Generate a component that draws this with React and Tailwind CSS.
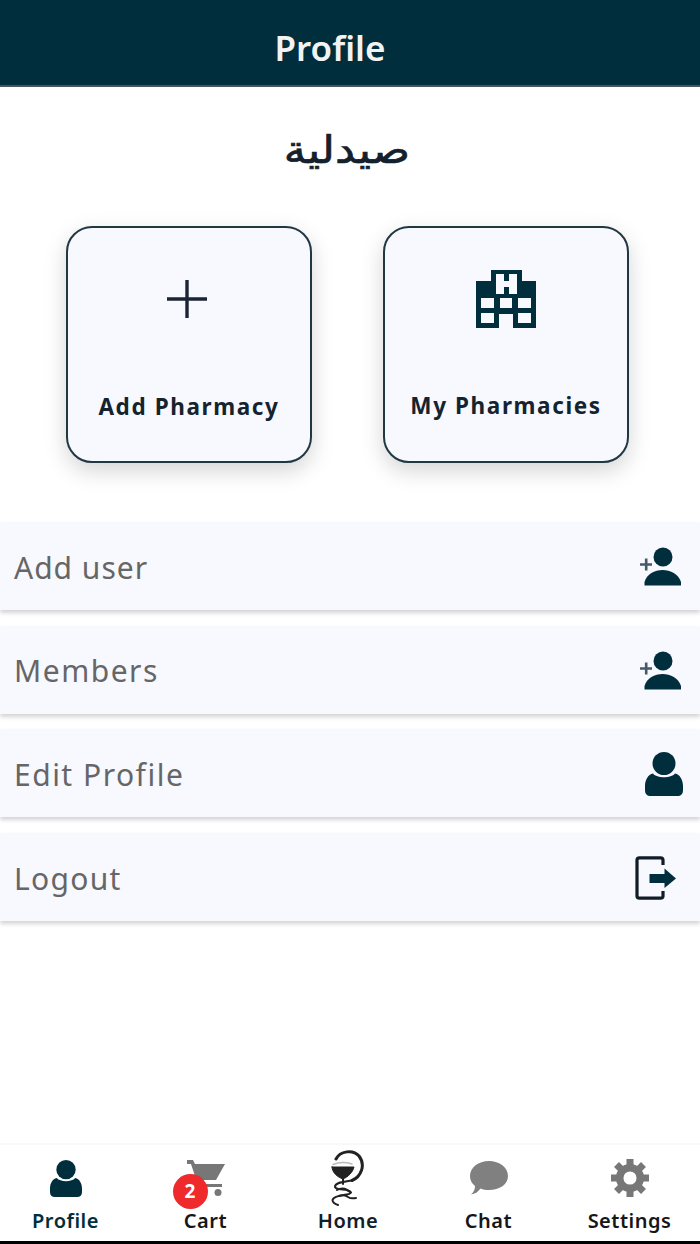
const Person = ({ className }) => (
  <svg viewBox="0 0 38 44" className={className} fill="#002e3d" preserveAspectRatio="none">
    <circle cx="19" cy="11.5" r="11.5" />
    <path d="M8 21.5C12 26.5 26 26.500 30 21.500C35 22.500 38 28 38 34V38C38 42 36 44 32 44H6C2 44 0 42 0 38V34C0 28 3 22.500 8 21.500Z" />
  </svg>
);

const PersonAdd = () => (
  <svg viewBox="0 0 42 39" className="h-[39px] w-[42px]">
    <circle cx="23" cy="10" r="9.500" fill="#002e3d" />
    <path d="M4.500 38.500V35C9 19 36 19 41 35V38.500Z" fill="#002e3d" />
    <path d="M0 17.500H12M6.200 11.500V23.500" stroke="#455a66" strokeWidth="2.600" />
  </svg>
);

const Exit = () => (
  <svg viewBox="0 0 42 44" className="h-[44px] w-[42px]">
    <path d="M28 9V4Q28 1.800 25.500 1.800H4.500Q2 1.800 2 4V40Q2 42.200 4.500 42.200H25.500Q28 42.200 28 40V35" fill="none" stroke="#101c26" strokeWidth="3.200" />
    <path d="M14.500 18H29.500V12.500L41 22.500L29.500 32V27H14.500Z" fill="#002e3d" />
  </svg>
);

const Hospital = () => (
  <svg viewBox="0 0 60 58" className="h-[58px] w-[60px]">
    <path fill="#002e3d" fillRule="evenodd" d="M15 0H46V11H60V58H37V44H23V58H0V11H15ZM20 4V24H41V4ZM5 28V38H18V28ZM24 28V38H36V28ZM42 28V38H55V28ZM5 43V53H18V43ZM42 43V53H55V43Z" />
    <path d="M28 4V11H33V4H36V0H24V4ZM28 24V17H33V24Z" fill="#002e3d" />
  </svg>
);

const Cart = () => (
  <svg viewBox="0 0 38 37" className="h-[37px] w-[38px]" fill="#777">
    <path d="M0 0H6L8 4H38L29 20H12L10 24H35V27H6L9 19L4 4H0Z" />
    <circle cx="11" cy="32.500" r="3.500" />
    <circle cx="31" cy="32.500" r="3.500" />
  </svg>
);

const Bowl = () => (
  <svg viewBox="0 0 36 56" className="h-[56px] w-[36px]" fill="none" stroke="#222" strokeLinecap="round">
    <path d="M6 9C10 1 23-1 29 6C36 15 31 27 22 30.500" strokeWidth="3" />
    <path d="M22 30.500C14 32 5 32 5 37C6 41 19 38 21 42.500C20 46 4 44 2.500 50C2.500 53 5 54 8 55" strokeWidth="2" />
    <path d="M2 17H24C23 22 18 27 13 29C7 27 2 22 2 17Z" fill="#222" strokeWidth="1" />
    <path d="M3 14.500Q12 11 22 14" stroke="#bbb" strokeWidth="1.500" />
    <path d="M13 28V34M7 40Q14 36 20 42M9 46Q15 44 18 47Q21 49 26 48" strokeWidth="2" />
  </svg>
);

const Chat = () => (
  <svg viewBox="0 0 38 34" className="h-[34px] w-[38px]" fill="#808080">
    <path d="M19 0C29.500 0 38 6.500 38 15C38 23.500 29.500 29 19 29C16 29 13 28.600 10.500 27.500C8 31 5 33 1 33.500C4 31 5 28 5 25C1.500 22 0 19 0 15C0 6.500 8.500 0 19 0Z" />
  </svg>
);

const Gear = () => (
  <svg viewBox="-19 -19 38 38" className="h-[38px] w-[38px]" fill="none" stroke="#777">
    <circle r="10.300" strokeWidth="7.500" />
    <path d="M0-19V-13M0 13V19M-19 0H-13M13 0H19M-13.500-13.500L-9-9M13.500-13.500L9-9M-13.500 13.500L-9 9M13.500 13.500L9 9" strokeWidth="7" />
  </svg>
);

const rows = [
  { label: 'Add user', icon: <PersonAdd />, pad: 'pr-[18px]', track: 'tracking-[1px]' },
  { label: 'Members', icon: <PersonAdd />, pad: 'pr-[18px]', track: 'tracking-[1.5px]' },
  { label: 'Edit Profile', icon: <Person className="h-[44px] w-[38px]" />, pad: 'pr-[17px]', track: 'tracking-[1.5px]' },
  { label: 'Logout', icon: <Exit />, pad: 'pr-[23px]', track: 'tracking-[1.3px]' },
];

const tabs = [
  { label: 'Profile', icon: <Person className="h-[37px] w-[32px]" />, color: 'text-[#002e3d]' },
  { label: 'Cart', icon: <Cart />, badge: '2', color: 'text-[#161616]' },
  { label: 'Home', icon: <Bowl />, color: 'text-[#10202b]' },
  { label: 'Chat', icon: <Chat />, color: 'text-[#161616]' },
  { label: 'Settings', icon: <Gear />, color: 'text-[#161616]' },
];

function ActionCard({ icon, label, labelClass }) {
  return (
    <button className="flex h-[237px] w-[246px] flex-col items-center rounded-[26px] border-2 border-[#213843] bg-[#f8f8ff] shadow-[0_8px_22px_rgba(0,0,0,0.17)]">
      <span className="flex h-[142px] items-center justify-center">{icon}</span>
      <span className={`whitespace-nowrap text-[22.500px] leading-8 font-bold text-[#14242e] ${labelClass}`}>{label}</span>
    </button>
  );
}

export default function App() {
  return (
    <div className="flex h-[1244px] w-[700px] flex-col overflow-hidden bg-white font-['Noto_Sans',sans-serif]">
      <header className="flex h-[87px] shrink-0 justify-center border-b-2 border-[#4c5265] bg-[#002e3d] pt-[24px] pr-[40px]">
        <h1 className="text-[35px] leading-[48px] font-semibold text-[#f3f3f3]">Profile</h1>
      </header>
      <main className="flex flex-1 flex-col">
        <h2 dir="rtl" className="mt-[38px] mr-[6px] h-[50px] scale-x-[1.18] text-center font-['DejaVu_Sans',sans-serif] text-[38px] leading-[50px] font-normal text-[#14202b] [-webkit-text-stroke:0.7px_#14202b]">صيدلية</h2>
        <section className="mt-[51px] flex justify-between pr-[71px] pl-[66px]">
          <ActionCard
            label="Add Pharmacy"
            labelClass="mt-[21px] tracking-[1.6px]"
            icon={<svg viewBox="0 0 40 40" className="mr-[5px] h-[40px] w-[40px]"><path d="M0 20H40M20 1V39" stroke="#1b2433" strokeWidth="3.400" /></svg>}
          />
          <ActionCard label="My Pharmacies" labelClass="mt-[20px] tracking-[1.6px]" icon={<Hospital />} />
        </section>
        <ul className="mt-[59px] flex flex-col gap-[15.700px]">
          {rows.map((r) => (
            <li key={r.label} className={`flex h-[88px] items-center justify-between bg-[#f8f8ff] pt-px pl-[14px] shadow-[0_3px_4px_rgba(0,0,0,0.17)] ${r.pad}`}>
              <span className={`pt-[2px] text-[30px] leading-10 text-[#666] ${r.track}`}>{r.label}</span>
              {r.icon}
            </li>
          ))}
        </ul>
      </main>
      <nav className="grid h-[101px] shrink-0 grid-cols-[131px_149px_136px_145px_137px] border-t-2 border-b-3 border-t-[#f8f8f8] border-b-black">
        {tabs.map((t) => (
          <a key={t.label} className={`flex flex-col items-center ${t.color}`}>
            <span className="relative mt-[3px] flex h-[60px] items-center justify-center">
              {t.icon}
              {t.badge && (
                <span className="absolute top-[26px] -left-[14px] flex h-[35px] w-[35px] items-center justify-center rounded-full bg-[#ee2a2d] text-[19px] font-bold text-white">{t.badge}</span>
              )}
            </span>
            <span className="text-[20px] leading-[26px] font-semibold tracking-[0.500px]">{t.label}</span>
          </a>
        ))}
      </nav>
    </div>
  );
}
